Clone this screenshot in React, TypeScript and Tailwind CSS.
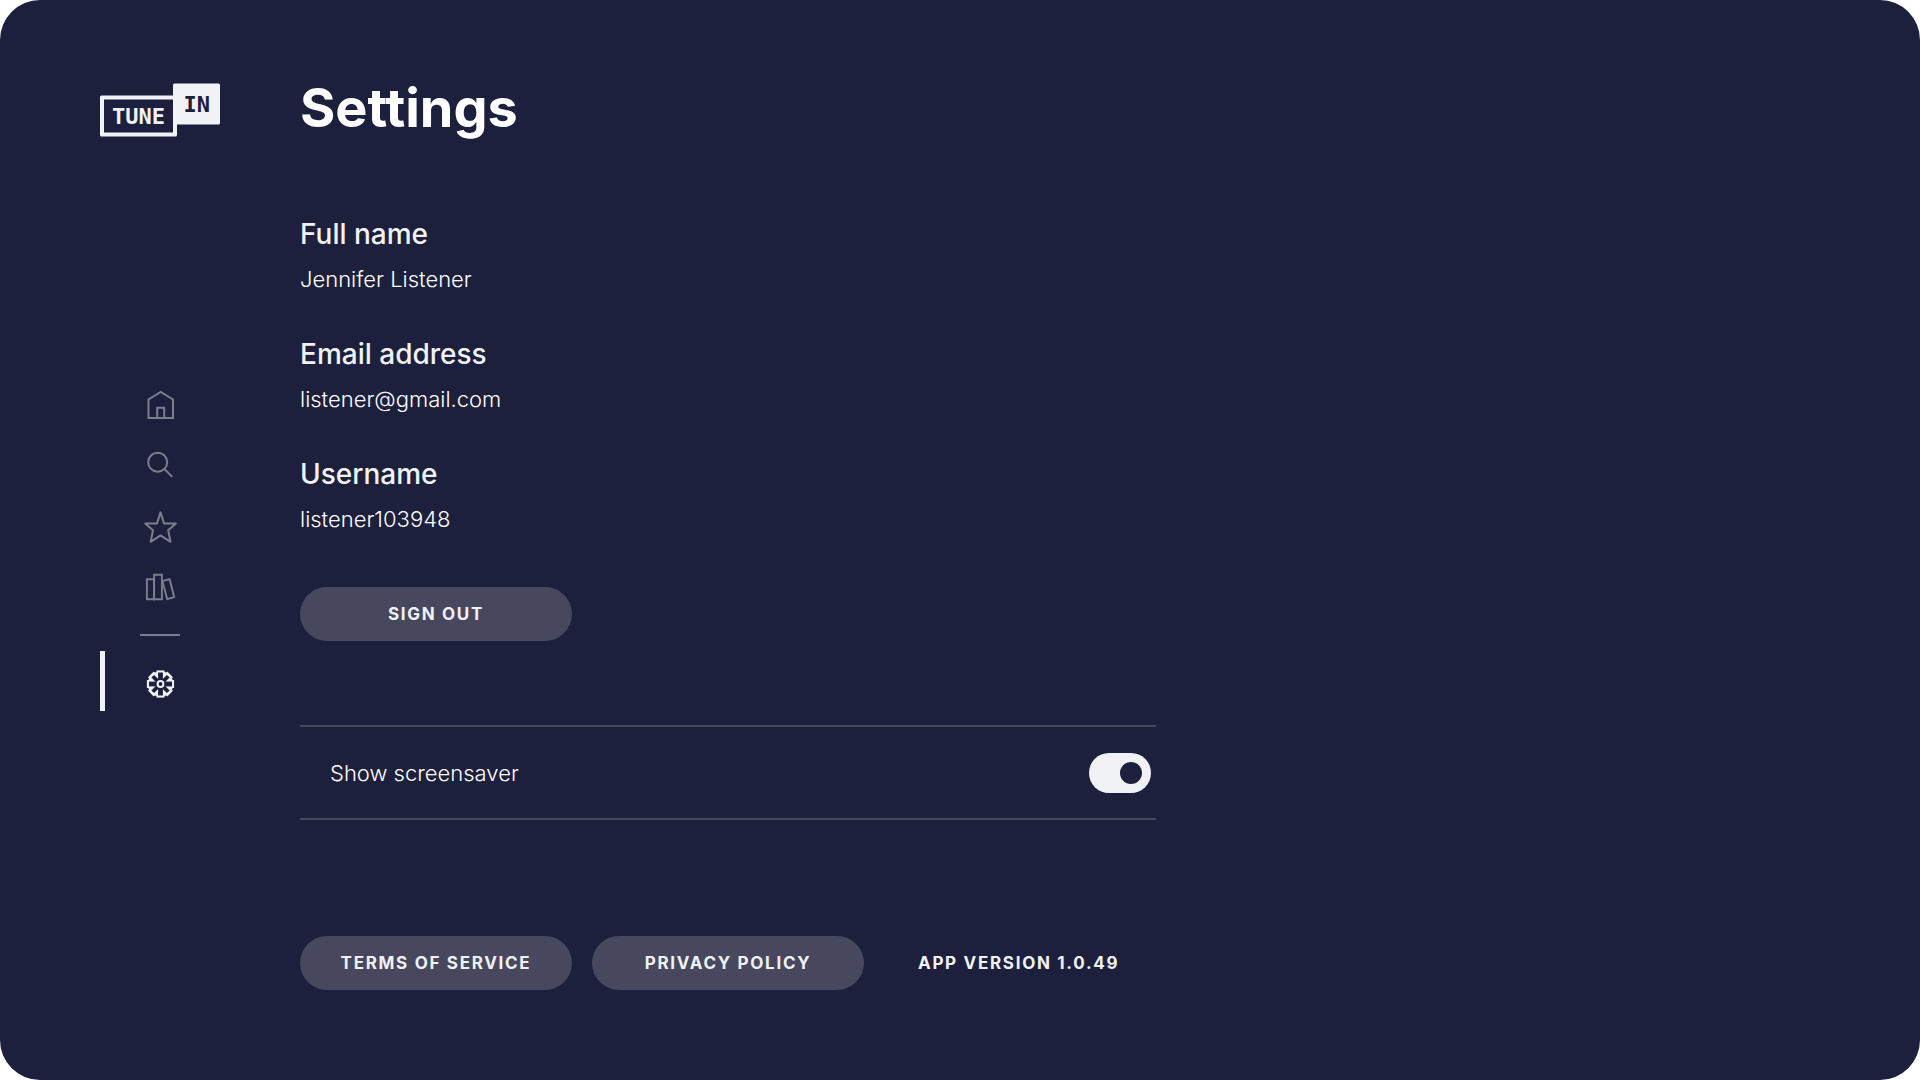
import type { ReactNode } from "react";

function Logo() {
  return (
    <svg viewBox="0 0 120 54" className="h-[54px] w-[120px]" role="img" aria-label="TuneIn">
      <rect x="0" y="12.500" width="77" height="41" rx="1.500" fill="#f0f2f5" />
      <path d="M4 16.500h69v33H4Z" fill="#1d203c" />
      <rect x="73" y=".5" width="47" height="41" rx="1.500" fill="#f0f2f5" />
      <text x="12" y="41" fontSize="22" fontWeight="700" fill="#f0f2f5" className="font-['DejaVu_Sans_Mono',monospace]">TUNE</text>
      <text x="83.500" y="29" fontSize="22" fontWeight="700" fill="#1d203c" className="font-['DejaVu_Sans_Mono',monospace]">IN</text>
    </svg>
  );
}

function Icon({ children, width = 2 }: { children: ReactNode; width?: number }) {
  return (
    <svg viewBox="0 0 40 40" className="size-10" fill="none" stroke="currentColor" strokeWidth={width} aria-hidden="true">
      {children}
    </svg>
  );
}

function HomeIcon() {
  return (
    <Icon>
      <path d="M8.500 14.500 20.700 7 33 14.500V33H8.500Z" />
      <path d="M17.200 33V22.800h7V33" />
    </Icon>
  );
}

function SearchIcon() {
  return (
    <Icon>
      <circle cx="17.700" cy="17.200" r="9.500" />
      <path d="m24.300 23.900 8 8" />
    </Icon>
  );
}

function StarIcon() {
  return (
    <Icon>
      <path d="M20.500 7.400 24 18.400H35.800L28.200 25.200 30.500 36.800 20.500 30.300 10.700 36.800 13 25.200 5.200 18.400H17Z" strokeLinejoin="round" />
    </Icon>
  );
}

function LibraryIcon() {
  return (
    <Icon width={1.9}>
      <path d="M6.900 14.200h7.200V34.200H6.900Z" />
      <path d="M14.100 9.800h7.800v24.400h-7.800Z" />
      <path d="m22.400 16.200 7.200-2L34.200 32.200l-7 1.900Z" />
    </Icon>
  );
}

const spokes = [0, 45, 90, 135, 180, 225, 270, 315];

function SettingsIcon() {
  return (
    <Icon>
      <circle cx="20.500" cy="23" r="12.800" fill="currentColor" stroke="none" />
      {spokes.map((angle) => (
        <g key={angle} stroke="none" transform={`rotate(${angle} 20.500 23)`}>
          <path d="M16.500 9.400h8V13h-8Z" fill="currentColor" />
          <path
            d={angle % 90 === 0 ? "M18.100 11.500h4.800v7.500h-4.800Z" : "M18.600 12h3.800v7h-3.800Z"}
            fill="#1d203c"
          />
        </g>
      ))}
      <circle cx="20.500" cy="23" r="5.200" fill="#1d203c" stroke="none" />
      <circle cx="20.500" cy="23" r="2.900" />
    </Icon>
  );
}

function NavLink({ label, active, children }: { label: string; active?: boolean; children: ReactNode }) {
  return (
    <a
      href="#"
      aria-label={label}
      aria-current={active ? "page" : undefined}
      className={
        active
          ? "flex h-15 items-center justify-center border-l-5 border-[#f0f2f5] pr-[5px] text-[#f0f2f5]"
          : "flex h-15 items-center justify-center text-[#7c7e8e]"
      }
    >
      {children}
    </a>
  );
}

function Field({ label, value }: { label: string; value: string }) {
  return (
    <div>
      <dt className="text-[28px] leading-9 font-medium text-[#f0f2f5]">{label}</dt>
      <dd className="mt-[11px] text-[22px] leading-8 font-light">{value}</dd>
    </div>
  );
}

function PillButton({ children }: { children: ReactNode }) {
  return (
    <button
      type="button"
      className="h-[54px] w-68 rounded-full bg-[#47485e] pt-0.5 text-[17px] font-bold tracking-widest text-[#f0f2f5] uppercase"
    >
      {children}
    </button>
  );
}

export default function App() {
  return (
    <div className="min-h-screen bg-white font-['Inter',sans-serif] text-white">
      <div className="flex min-h-screen gap-20 rounded-[40px] bg-[#1d203c] px-25 pt-[83px] pb-20">
        <aside className="w-30 shrink-0">
          <Logo />
          <nav aria-label="Main" className="mt-[238px] flex flex-col">
            <NavLink label="Home"><HomeIcon /></NavLink>
            <NavLink label="Search"><SearchIcon /></NavLink>
            <NavLink label="Favorites"><StarIcon /></NavLink>
            <NavLink label="Library"><LibraryIcon /></NavLink>
            <hr className="mx-auto mt-[19px] mb-[15px] w-10 border-t-2 border-[#7c7e8e]" />
            <NavLink label="Settings" active><SettingsIcon /></NavLink>
          </nav>
        </aside>

        <main className="max-w-[856px] flex-1">
          <h1 className="-mt-2 text-[54px] leading-[66px] font-bold">Settings</h1>

          <dl className="mt-[75px] flex flex-col gap-[41px]">
            <Field label="Full name" value="Jennifer Listener" />
            <Field label="Email address" value="listener@gmail.com" />
            <Field label="Username" value="listener103948" />
          </dl>

          <div className="mt-[52px]">
            <PillButton>Sign out</PillButton>
          </div>

          <label className="mt-[84px] flex h-[95px] items-center justify-between border-y-2 border-[#47485e] pr-[5px] pl-[30px]">
            <span className="text-[22px] leading-8 font-light">Show screensaver</span>
            <input
              type="checkbox"
              role="switch"
              defaultChecked
              className="flex h-10 w-[62px] appearance-none items-center rounded-full bg-[#7c7e8e] px-[9px] before:size-[22px] before:rounded-full before:bg-[#1d203c] checked:justify-end checked:bg-[#f0f2f5]"
            />
          </label>

          <footer className="mt-29 flex items-center gap-5">
            <PillButton>Terms of service</PillButton>
            <PillButton>Privacy policy</PillButton>
            <p className="ml-[34px] pt-0.5 text-[17px] font-bold tracking-widest whitespace-nowrap text-[#f0f2f5] uppercase">App version 1.0.49</p>
          </footer>
        </main>
      </div>
    </div>
  );
}
